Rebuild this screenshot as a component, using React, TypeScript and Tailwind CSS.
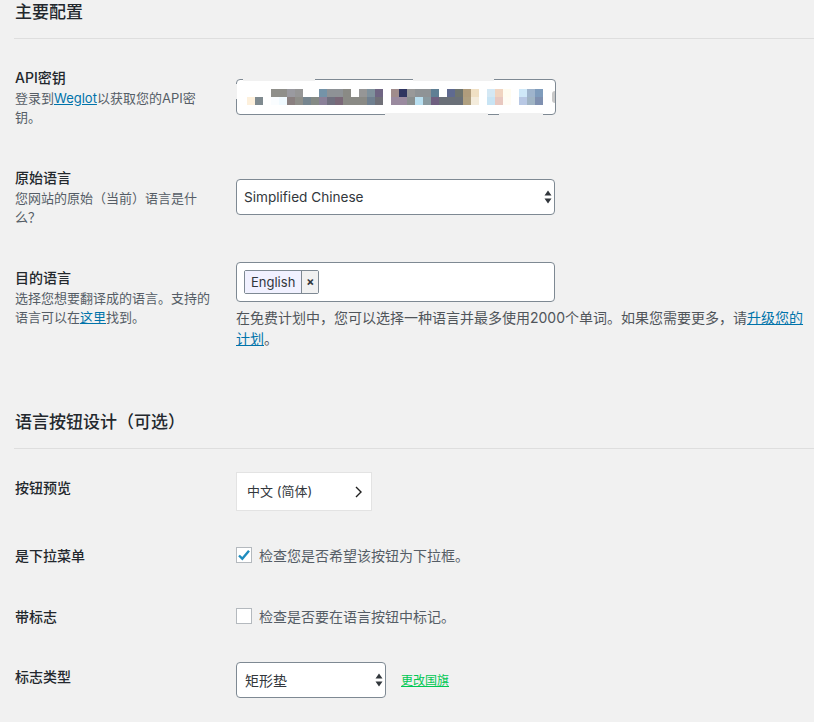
import React from "react";

const font = { fontFamily: '"Inter", "Noto Sans CJK SC", sans-serif' };

const top = ["#8f8f8a","#8f8f8a","#9a9aa0","#969696","#fff","#fff","#7493a8","#8e9296","#8e9296","#8a8a85","#fff","#969696","#7f919c","#6f6583","#fff","#a08c8c","#2f3560","#999999","#8f9396","#8f9396","#5f7f94","#fff","#5f6a90","#6e746e","#b09c7c","#f0e0c4","#fff","#d4e8f4","#f0d4c0","#fffcf0","#fff","#cfe8f8","#9fb4cc","#7f9cbc"];
const bottom = ["#fdf0dc","#7f8a8f","#fff","#fafdff","#f0faff","#8a8080","#8f8f8a","#76858f","#858a85","#8a8098","#70707f","#7a6878","#8a8a85","#8a8a85","#8a8a85","#708090","#707078","#fff","#9a8a9f","#9a8a9f","#8a8f8f","#b8dff0","#8a9aa0","#6f6080","#6a7078","#6a7078","#6a7078","#b0a080","#f4ecdc","#fff","#c8e4f4","#e8c8c0","#fffcf4","#fff","#b8c8e4","#a0b4c4","#7f90b0"];

function Arrows() {
  return (
    <svg className="absolute right-[3px] top-1/2 -translate-y-1/2 pointer-events-none" width="8" height="14" viewBox="0 0 8 14">
      <path d="M4 0.5 L7.5 5.5 H0.5 Z M4 13.5 L0.5 8.5 H7.5 Z" fill="#32373c" />
    </svg>
  );
}

function Heading({ children, className }: { children: React.ReactNode; className?: string }) {
  return (
    <h2 className={`-ml-px pl-px h-[39px] border-b border-[#dedede] text-[17px] leading-[24px] font-medium text-[#23282d] ${className ?? ""}`}>
      {children}
    </h2>
  );
}

function Label({ children }: { children: React.ReactNode }) {
  return <div className="text-[14px] leading-[20px] font-medium text-[#23282d]">{children}</div>;
}

function Desc({ children }: { children: React.ReactNode }) {
  return <p className="mt-px w-[196px] text-[13px] leading-[19px] text-[#555d66]">{children}</p>;
}

export default function App() {
  return (
    <div className="w-[814px] h-[722px] overflow-hidden bg-[#f1f1f1] pl-[15px]" style={font}>
      <Heading>主要配置</Heading>

      <div className="flex mt-[29px]">
        <div className="w-[221px] shrink-0">
          <Label>API密钥</Label>
          <Desc>
            登录到<a href="#" className="text-[#0073aa] underline">Weglot</a>以获取您的API密钥。
          </Desc>
        </div>
        <div className="mt-[11px] relative w-[320px] h-[36px] bg-white border border-[#7e8993] rounded">
          <div className="absolute left-[10px] top-[9px]">
            <div className="flex ml-[24px]">
              {top.map((c, i) => (
                <div key={i} className="w-[8px] h-[8px]" style={{ background: c }} />
              ))}
            </div>
            <div className="flex">
              {bottom.map((c, i) => (
                <div key={i} className="w-[8px] h-[8px]" style={{ background: c }} />
              ))}
            </div>
          </div>
          <div className="absolute left-[6px] w-[72px] -top-px h-[2px] bg-[#f1f1f1]" />
          <div className="absolute left-[176px] w-[81px] -top-px h-[2px] bg-[#f1f1f1]" />
          <div className="absolute left-[148px] w-[103px] -bottom-px h-[2px] bg-[#f1f1f1]" />
          <div className="absolute left-[262px] w-[44px] -bottom-px h-[2px] bg-[#f1f1f1]" />
          <div className="absolute -left-px top-[4px] w-px h-[15px] bg-[#f1f1f1]" />
          <div className="absolute left-[315px] top-[11px] w-[3px] h-[12px] bg-[#c8c8c8] rounded-l-full" />
        </div>
      </div>

      <div className="flex mt-[41px]">
        <div className="w-[221px] shrink-0">
          <Label>原始语言</Label>
          <Desc>您网站的原始（当前）语言是什么？</Desc>
        </div>
        <div className="mt-[11px] relative w-[319px] h-[36px]">
          <select className="appearance-none w-full h-full bg-white border border-[#7e8993] rounded pl-[7px] text-[13.6px] text-[#32373c] outline-none">
            <option>Simplified Chinese</option>
          </select>
          <Arrows />
        </div>
      </div>

      <div className="flex mt-[35px]">
        <div className="w-[221px] shrink-0 pt-[6px]">
          <Label>目的语言</Label>
          <Desc>
            选择您想要翻译成的语言。支持的语言可以在<a href="#" className="text-[#0073aa] underline">这里</a>找到。
          </Desc>
        </div>
        <div className="flex-1">
          <div className="w-[319px] h-[40px] bg-white border border-[#7e8993] rounded flex items-center pl-[7px]">
            <div className="flex h-[24px] border border-[#7e8993] rounded-[2px] text-[13px] text-[#32373c]">
              <span className="bg-[#f1f1ff] px-[6px] leading-[22px] border-r border-[#7e8993]">English</span>
              <span className="w-[16px] text-center text-[12px] font-bold leading-[22px] bg-[#f1f1f1]">×</span>
            </div>
          </div>
          <p className="mt-[5px] text-[14px] leading-[21px] text-[#50555a]">
            在免费计划中，您可以选择一种语言并最多使用2000个单词。如果您需要更多，请<a href="#" className="text-[#0073aa] underline">升级您的计划</a>。
          </p>
        </div>
      </div>

      <Heading className="mt-[61px]">语言按钮设计（可选）</Heading>

      <div className="flex mt-[23px]">
        <div className="w-[221px] shrink-0 pt-[6px]">
          <Label>按钮预览</Label>
        </div>
        <div className="w-[136px] h-[39px] bg-white border border-[#e3e3e3] flex items-center justify-between pl-[10px] pr-[8px] text-[13px] text-[#32373c]">
          <span>中文 (简体)</span>
          <svg width="9" height="12" viewBox="0 0 9 12" fill="none">
            <path d="M2 1 L7 6 L2 11" stroke="#1f1f1f" strokeWidth="1.4" />
          </svg>
        </div>
      </div>

      <div className="flex mt-[35px]">
        <div className="w-[221px] shrink-0">
          <Label>是下拉菜单</Label>
        </div>
        <div className="flex items-center h-[20px] -mt-px">
          <div className="w-[16px] h-[16px] bg-white border border-[#b4b9be] flex items-center justify-center">
            <svg width="14" height="12" viewBox="0 0 14 12" fill="none">
              <path d="M2 6.5 L5.3 9.7 L12 1.8" stroke="#1e8cbe" strokeWidth="2.4" />
            </svg>
          </div>
          <span className="ml-[7px] text-[14px] text-[#555d66]">检查您是否希望该按钮为下拉框。</span>
        </div>
      </div>

      <div className="flex mt-[41px]">
        <div className="w-[221px] shrink-0">
          <Label>带标志</Label>
        </div>
        <div className="flex items-center h-[20px] -mt-px">
          <div className="w-[16px] h-[16px] bg-white border border-[#b4b9be]" />
          <span className="ml-[7px] text-[14px] text-[#555d66]">检查是否要在语言按钮中标记。</span>
        </div>
      </div>

      <div className="flex mt-[35px]">
        <div className="w-[221px] shrink-0 pt-[5px]">
          <Label>标志类型</Label>
        </div>
        <div className="relative w-[150px] h-[36px]">
          <select className="appearance-none w-full h-full bg-white border border-[#7e8993] rounded pl-[8px] text-[14px] text-[#32373c] outline-none">
            <option>矩形垫</option>
          </select>
          <Arrows />
        </div>
        <a href="#" className="ml-[15px] mt-[10px] text-[12px] leading-[17px] text-[#00c853] underline">更改国旗</a>
      </div>
    </div>
  );
}
